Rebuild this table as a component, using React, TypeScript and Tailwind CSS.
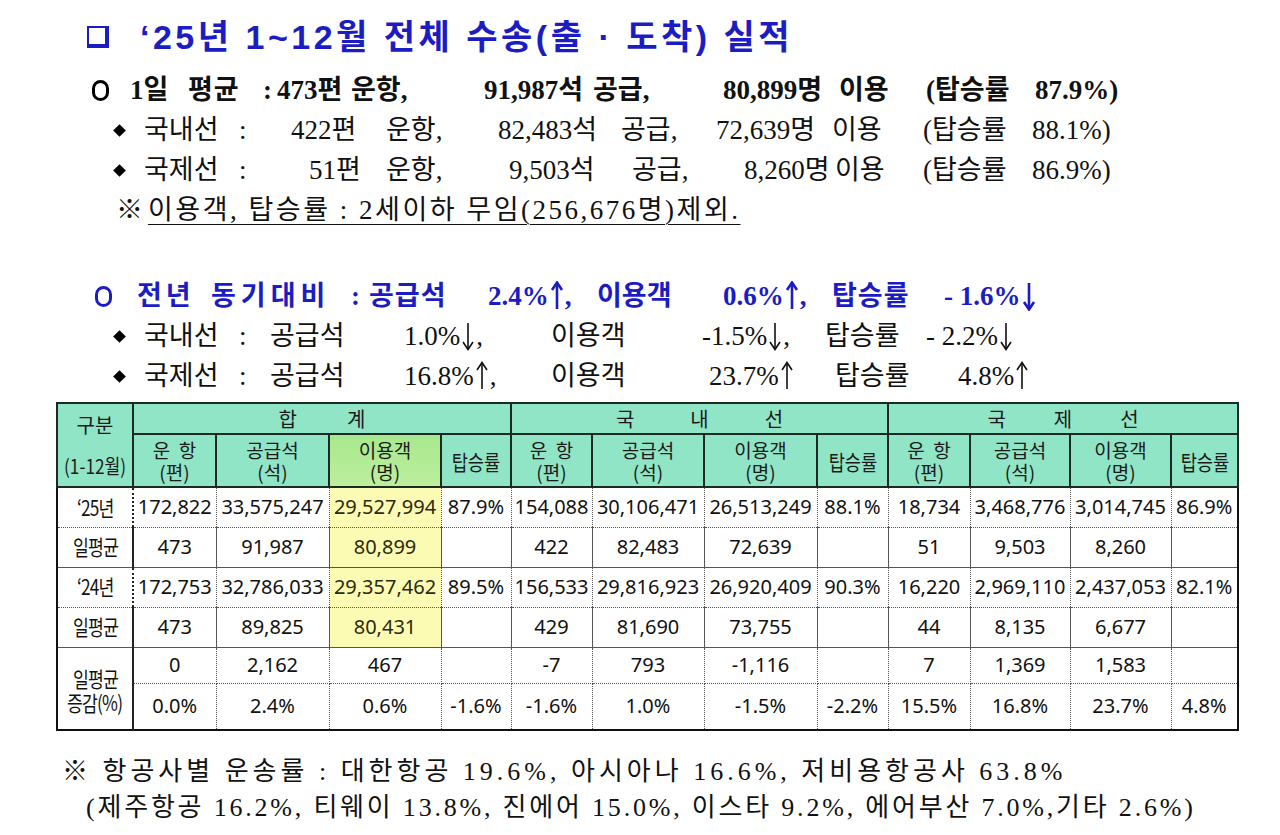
import React from "react";

type Seg = [string, React.ReactNode];

const serif = "font-['Liberation_Serif','Noto_Sans_CJK_KR',serif]";
const sans = "font-['Noto_Sans','Noto_Sans_CJK_KR',sans-serif]";
const kr = "font-['Noto_Sans_CJK_KR',sans-serif]";
const blue = "text-[#1c1cc4]";

function Ring({ color }: { color: string }) {
    return <span className={`inline-block h-[21px] w-[17px] rounded-full border-[3.5px] ${color}`} />;
}

function Diamond() {
    return <span className="ml-[2px] inline-block h-[9px] w-[9px] rotate-45 bg-black" />;
}

// tall thin arrows like the hwp glyphs
function Arrow({ up, bold }: { up?: boolean; bold?: boolean }) {
    const w = bold ? 2.6 : 1.6;
    return (
        <svg width="14" height="30" viewBox="0 0 14 30" className="mx-[1px] shrink-0">
            <path d="M7 2 V28" stroke="currentColor" strokeWidth={w} />
            {up ? (
                <path d="M2 9 L7 1.5 L12 9" fill="none" stroke="currentColor" strokeWidth={w} />
            ) : (
                <path d="M2 21 L7 28.5 L12 21" fill="none" stroke="currentColor" strokeWidth={w} />
            )}
        </svg>
    );
}

function Line({ segs, className }: { segs: Seg[]; className: string }) {
    return (
        <div className={`flex h-[40px] items-center whitespace-nowrap ${className}`}>
            {segs.map(([w, t], i) => (
                <span key={i} className={`flex shrink-0 items-center ${w}`}>
                    {t}
                </span>
            ))}
        </div>
    );
}

const cols = [
    "w-[76px]",
    "w-[83px]",
    "w-[113px]",
    "w-[112px]",
    "w-[70px]",
    "w-[81px]",
    "w-[112px]",
    "w-[113px]",
    "w-[71px]",
    "w-[82px]",
    "w-[100px]",
    "w-[101px]",
    "w-[67px]",
];

const subHeads: string[][] = [
    ["운  항", "(편)"],
    ["공급석", "(석)"],
    ["이용객", "(명)"],
    ["탑승률"],
];

const groups: { chars: string[]; gap: string }[] = [
    { chars: ["합", "계"], gap: "gap-[50px]" },
    { chars: ["국", "내", "선"], gap: "gap-[56px]" },
    { chars: ["국", "제", "선"], gap: "gap-[48px]" },
];

const rows: { label: string; h: string; solid: boolean; cells: string[] }[] = [
    {
        label: "‘25년",
        h: "h-[40px]",
        solid: false,
        cells: ["172,822", "33,575,247", "29,527,994", "87.9%", "154,088", "30,106,471", "26,513,249", "88.1%", "18,734", "3,468,776", "3,014,745", "86.9%"],
    },
    {
        label: "일평균",
        h: "h-[40px]",
        solid: true,
        cells: ["473", "91,987", "80,899", "", "422", "82,483", "72,639", "", "51", "9,503", "8,260", ""],
    },
    {
        label: "‘24년",
        h: "h-[40px]",
        solid: false,
        cells: ["172,753", "32,786,033", "29,357,462", "89.5%", "156,533", "29,816,923", "26,920,409", "90.3%", "16,220", "2,969,110", "2,437,053", "82.1%"],
    },
    {
        label: "일평균",
        h: "h-[40px]",
        solid: true,
        cells: ["473", "89,825", "80,431", "", "429", "81,690", "73,755", "", "44", "8,135", "6,677", ""],
    },
    {
        label: "",
        h: "h-[36px]",
        solid: false,
        cells: ["0", "2,162", "467", "", "-7", "793", "-1,116", "", "7", "1,369", "1,583", ""],
    },
    {
        label: "",
        h: "h-[47px]",
        solid: false,
        cells: ["0.0%", "2.4%", "0.6%", "-1.6%", "-1.6%", "1.0%", "-1.5%", "-2.2%", "15.5%", "16.8%", "23.7%", "4.8%"],
    },
];

const th = "border-2 border-[#1b2a22] bg-[#90e5c6] p-0 font-normal text-[#1a1a1a]";

function Table() {
    return (
        <table className={`table-fixed border-collapse border-2 border-[#111] ${sans}`}>
            <colgroup>
                {cols.map((c, i) => (
                    <col key={i} className={c} />
                ))}
            </colgroup>
            <thead>
                <tr className="h-[31px]">
                    <th rowSpan={2} className={th}>
                        <div className={`flex flex-col items-center text-[20px] leading-[24px] ${kr}`}>
                            <span>구분</span>
                            <span className="mt-[17px] inline-block scale-x-[0.86] whitespace-nowrap">(1-12월)</span>
                        </div>
                    </th>
                    {groups.map((g, i) => (
                        <th key={i} colSpan={4} className={th}>
                            <div className={`flex justify-center text-[20px] leading-[24px] ${g.gap} ${kr}`}>
                                {g.chars.map((c, j) => (
                                    <span key={j}>{c}</span>
                                ))}
                            </div>
                        </th>
                    ))}
                </tr>
                <tr className="h-[53px]">
                    {[0, 1, 2].map((g) =>
                        subHeads.map((s, i) => (
                            <th
                                key={`${g}-${i}`}
                                className={`${th} ${g === 0 && i === 2 ? "bg-linear-to-b from-[#a7e98e] to-[#bdee9d]" : ""}`}
                            >
                                <div className={`flex flex-col items-center whitespace-pre text-[19px] leading-[22px] ${kr}`}>
                                    {s.map((t, k) => (
                                        <span
                                            key={k}
                                            className={s.length === 1 ? "inline-block scale-x-[0.84] whitespace-nowrap text-[21px]" : ""}
                                        >
                                            {t}
                                        </span>
                                    ))}
                                </div>
                            </th>
                        ))
                    )}
                </tr>
            </thead>
            <tbody>
                {rows.map((r, ri) => (
                    <tr key={ri} className={r.h}>
                        {ri < 4 && (
                            <td
                                className={`border-r-2 border-b border-r-[#222] p-0 text-center ${
                                    r.solid ? "border-b-[#555]" : "border-b-[#555] border-dotted border-r-solid"
                                }`}
                            >
                                <span className={`inline-block scale-x-[0.82] text-[21px] tracking-[-1px] ${kr}`}>
                                    {r.label}
                                </span>
                            </td>
                        )}
                        {ri === 4 && (
                            <td rowSpan={2} className="border-r-2 border-solid border-r-[#222] p-0 text-center">
                                <div className={`flex flex-col items-center pt-[4px] text-[21px] leading-[24px] tracking-[-1px] ${kr}`}>
                                    <span className="inline-block scale-x-[0.82]">일평균</span>
                                    <span className="inline-block scale-x-[0.82] whitespace-nowrap">증감(%)</span>
                                </div>
                            </td>
                        )}
                        {r.cells.map((c, ci) => (
                            <td
                                key={ci}
                                className={`border-r border-b border-[#555] p-0 text-center text-[20px] ${
                                    r.solid ? "border-b-solid border-r-dotted" : "border-dotted"
                                } ${ci === 2 && ri < 4 ? "bg-[#fcfbb3] text-[#2a2a12]" : ""} ${
                                    ci === 2 && ri === 0 ? "border-l border-l-solid border-l-[#555]" : ""
                                }`}
                            >
                                {c}
                            </td>
                        ))}
                    </tr>
                ))}
            </tbody>
        </table>
    );
}

export default function App() {
    const black = "border-black";
    const blueRing = "border-[#1c1cc4]";
    return (
        <div className={`h-[835px] w-[1280px] overflow-hidden bg-white text-[#111] ${serif}`}>
            <div className="flex h-[70px] items-center pt-[4px]">
                <span className="ml-[87px] inline-block h-[22px] w-[22px] border-2 border-r-4 border-b-4 border-[#1c1cc4]" />
                <span
                    className={`ml-[31px] font-['Liberation_Sans','Noto_Sans_CJK_KR',sans-serif] text-[34px] font-bold tracking-[3.5px] ${blue}`}
                >
                    ‘25년 1~12월 전체 수송(출 · 도착) 실적
                </span>
            </div>

            <Line
                className="text-[27px] font-bold"
                segs={[
                    ["w-[92px]", ""],
                    ["w-[38px]", <Ring color={black} />],
                    ["w-[58px]", "1일"],
                    ["w-[75px] tracking-[1px]", "평균"],
                    ["w-[14px]", ":"],
                    ["w-[74px]", "473편"],
                    ["w-[133px]", "운항,"],
                    ["w-[109px]", "91,987석"],
                    ["w-[130px]", "공급,"],
                    ["w-[116px]", "80,899명"],
                    ["w-[87px]", "이용"],
                    ["w-[109px]", "(탑승률"],
                    ["", "87.9%)"],
                ]}
            />
            <Line
                className="text-[27px]"
                segs={[
                    ["w-[113px]", ""],
                    ["w-[31px]", <Diamond />],
                    ["w-[95px]", "국내선"],
                    ["w-[52px]", ":"],
                    ["w-[95px]", "422편"],
                    ["w-[112px]", "운항,"],
                    ["w-[123px]", "82,483석"],
                    ["w-[95px]", "공급,"],
                    ["w-[116px]", "72,639명"],
                    ["w-[91px]", "이용"],
                    ["w-[109px]", "(탑승률"],
                    ["", "88.1%)"],
                ]}
            />
            <Line
                className="text-[27px]"
                segs={[
                    ["w-[113px]", ""],
                    ["w-[31px]", <Diamond />],
                    ["w-[95px]", "국제선"],
                    ["w-[70px]", ":"],
                    ["w-[77px]", "51편"],
                    ["w-[123px]", "운항,"],
                    ["w-[123px]", "9,503석"],
                    ["w-[112px]", "공급,"],
                    ["w-[91px]", "8,260명"],
                    ["w-[88px]", "이용"],
                    ["w-[109px]", "(탑승률"],
                    ["", "86.9%)"],
                ]}
            />
            <Line
                className="text-[27px]"
                segs={[
                    ["w-[116px]", ""],
                    ["w-[32px]", "※"],
                    [
                        "underline underline-offset-[5px] decoration-1 tracking-[2.5px]",
                        "이용객, 탑승률 : 2세이하 무임(256,676명)제외.",
                    ],
                ]}
            />

            <div className="h-[46px]" />

            <Line
                className={`text-[27px] font-bold ${blue}`}
                segs={[
                    ["w-[95px]", ""],
                    ["w-[42px]", <Ring color={blueRing} />],
                    ["w-[74px] tracking-[4px]", "전년"],
                    ["w-[140px] tracking-[5px]", "동기대비"],
                    ["w-[18px]", ":"],
                    ["w-[119px] tracking-[1px]", "공급석"],
                    [
                        "w-[109px]",
                        <>
                            2.4%
                            <Arrow up bold />,
                        </>,
                    ],
                    ["w-[126px]", "이용객"],
                    [
                        "w-[109px]",
                        <>
                            0.6%
                            <Arrow up bold />,
                        </>,
                    ],
                    ["w-[112px] tracking-[1px]", "탑승률"],
                    [
                        "",
                        <>
                            - 1.6%
                            <Arrow bold />
                        </>,
                    ],
                ]}
            />
            <Line
                className="text-[27px]"
                segs={[
                    ["w-[113px]", ""],
                    ["w-[31px]", <Diamond />],
                    ["w-[95px]", "국내선"],
                    ["w-[31px]", ":"],
                    ["w-[134px]", "공급석"],
                    [
                        "w-[147px]",
                        <>
                            1.0%
                            <Arrow />,
                        </>,
                    ],
                    ["w-[151px]", "이용객"],
                    [
                        "w-[123px]",
                        <>
                            -1.5%
                            <Arrow />,
                        </>,
                    ],
                    ["w-[101px]", "탑승률"],
                    [
                        "",
                        <>
                            - 2.2%
                            <Arrow />
                        </>,
                    ],
                ]}
            />
            <Line
                className="text-[27px]"
                segs={[
                    ["w-[113px]", ""],
                    ["w-[31px]", <Diamond />],
                    ["w-[95px]", "국제선"],
                    ["w-[31px]", ":"],
                    ["w-[134px]", "공급석"],
                    [
                        "w-[147px]",
                        <>
                            16.8%
                            <Arrow up />,
                        </>,
                    ],
                    ["w-[158px]", "이용객"],
                    [
                        "w-[126px]",
                        <>
                            23.7%
                            <Arrow up />
                        </>,
                    ],
                    ["w-[123px]", "탑승률"],
                    [
                        "",
                        <>
                            4.8%
                            <Arrow up />
                        </>,
                    ],
                ]}
            />

            <div className="ml-[56px] mt-[6px]">
                <Table />
            </div>

            <div className="h-[22px]" />
            <div className="flex h-[36px] items-center whitespace-nowrap text-[26px] tracking-[4px]">
                <span className="w-[62px] shrink-0" />
                <span>※ 항공사별 운송률 : 대한항공 19.6%, 아시아나 16.6%, 저비용항공사 63.8%</span>
            </div>
            <div className="flex h-[36px] items-center whitespace-nowrap text-[26px] tracking-[2.8px]">
                <span className="w-[86px] shrink-0" />
                <span>(제주항공 16.2%, 티웨이 13.8%, 진에어 15.0%, 이스타 9.2%, 에어부산 7.0%,기타 2.6%)</span>
            </div>
        </div>
    );
}
